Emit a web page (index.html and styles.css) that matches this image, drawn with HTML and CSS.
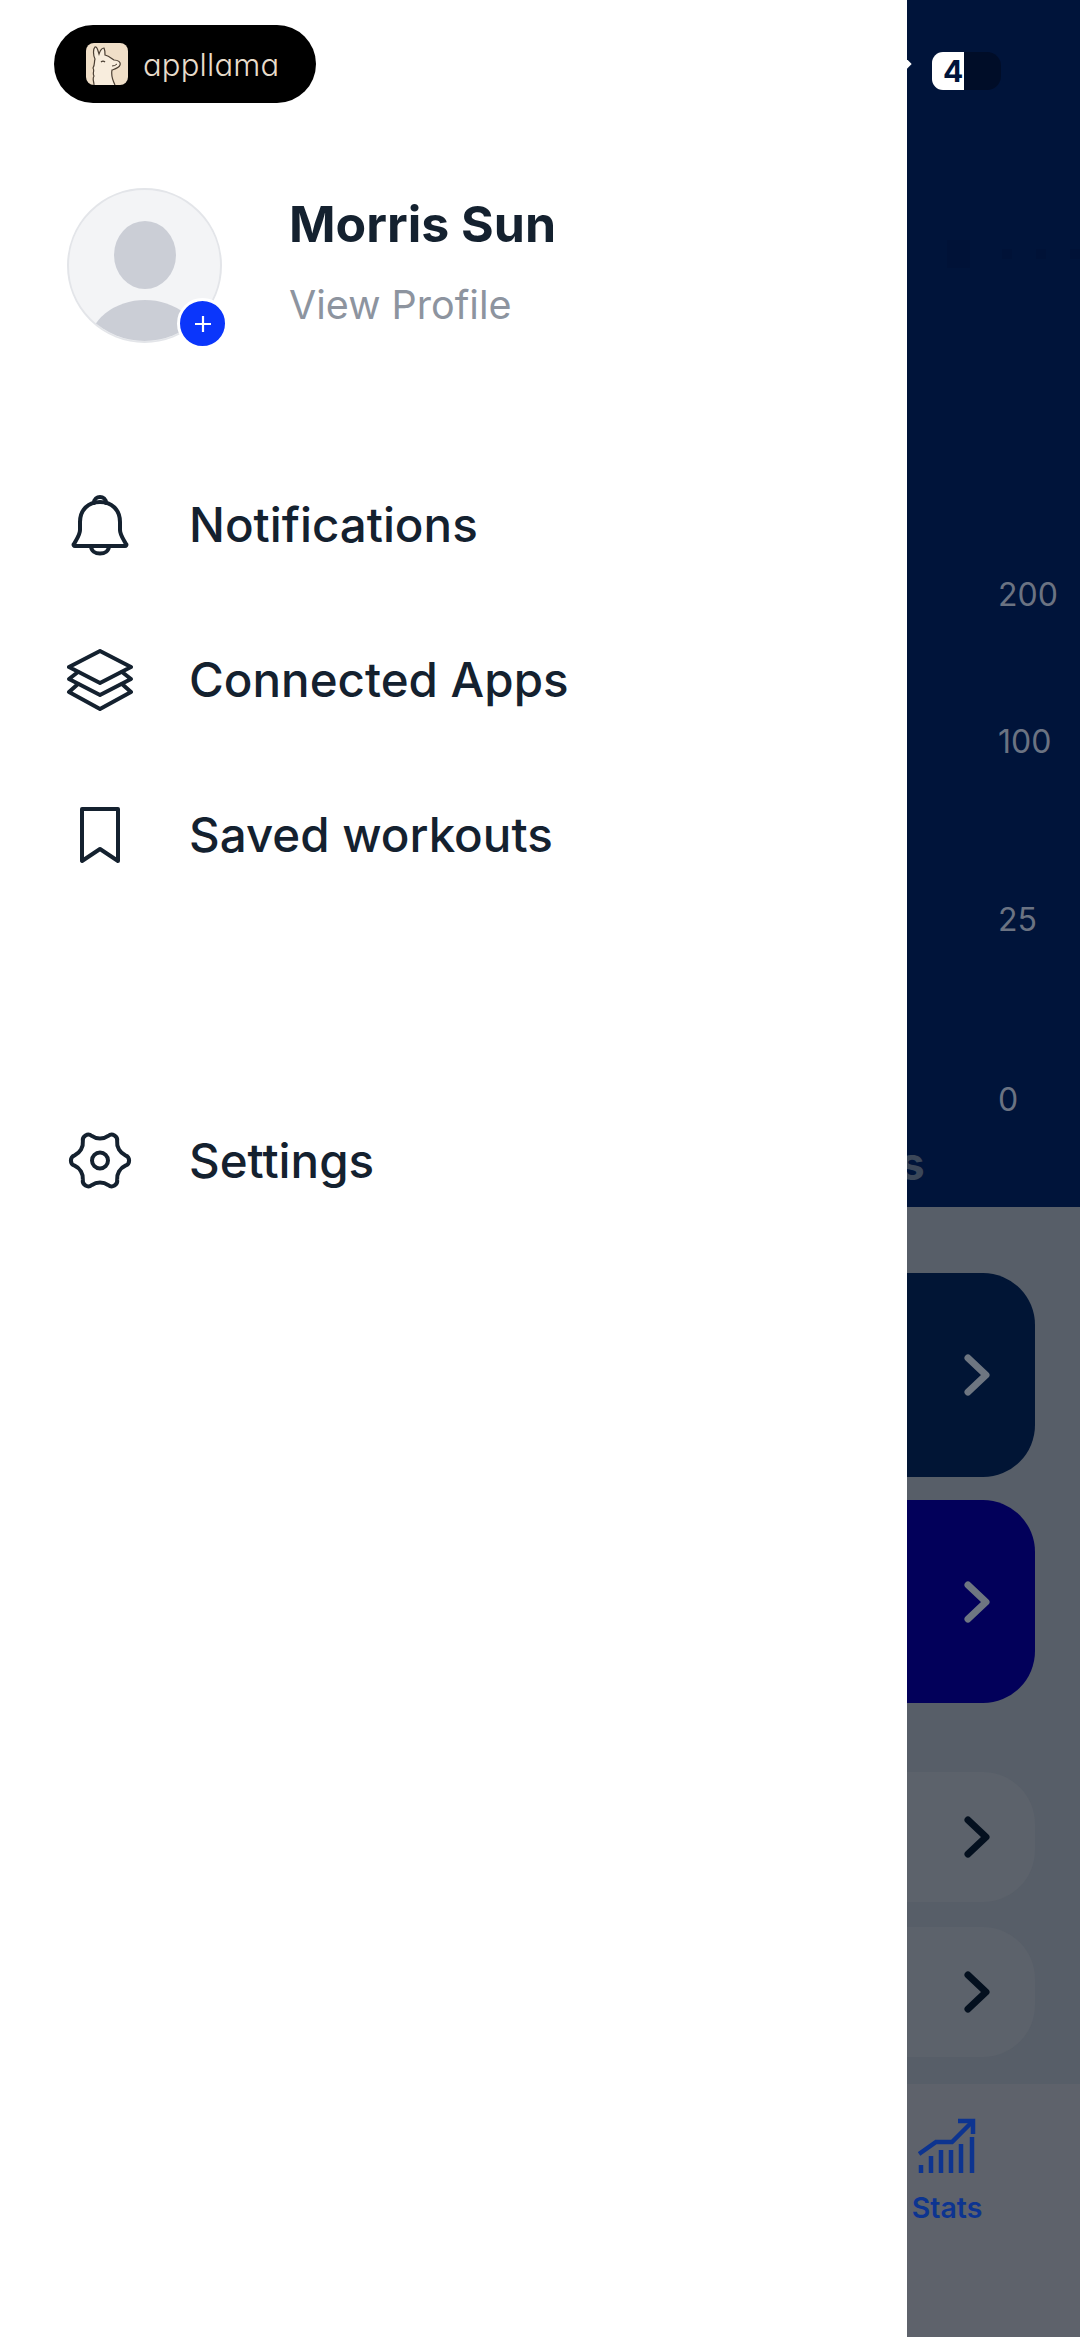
FILE: index.html
```html
<!DOCTYPE html>
<html>
<head>
    <title>Appllama</title>
    <meta name="viewport" content="width=device-width, initial-scale=1.0">
    <link rel="stylesheet" href="styles.css">
</head>
<body>
    <div id="app">
        <div id="drawer">
            <div class="brand">
                <svg class="brand-logo" viewBox="0 0 42 42">
                    <rect width="42" height="42" rx="8" fill="#f0dfc8"/>
                    <path d="M8 42C8 38 6 36 8 33C6 30 9 28 7 25C9 22 8 19 9 16C7 12 7 6 9 4C11 3 12 8 13 11C14 8 15 5 18 5C19 7 19 10 19 12C23 13 25 15 28 17C32 17 35 19 34 22C33 25 29 26 26 27C25 32 27 38 29 42" fill="#f8eddd" stroke="#4b3f33" stroke-width="1.2"/>
                    <path d="M15 19Q17 17 19 19" fill="none" stroke="#4b3f33" stroke-width="1.2"/>
                    <path d="M26 23Q29 23 31 21" fill="none" stroke="#4b3f33" stroke-width="1"/>
                </svg>
                <span class="brand-name">appllama</span>
            </div>

            <div class="profile">
                <div class="avatar">
                    <div class="avatar-clip">
                        <div class="avatar-head"></div>
                        <div class="avatar-body"></div>
                    </div>
                    <div class="avatar-add">
                        <svg viewBox="0 0 20 20" width="20" height="20"><path d="M10 2V18M2 10H18" stroke="#fff" stroke-width="2.2" fill="none"/></svg>
                    </div>
                </div>
                <div class="profile-text">
                    <div class="profile-name">Morris Sun</div>
                    <div class="profile-link">View Profile</div>
                </div>
            </div>

            <div class="menu">
                <div class="menu-item">
                    <div class="menu-icon">
                        <svg viewBox="0 0 60 62" width="60" height="62">
                            <path d="M30 8C18 8 10 16 10 28V36C10 41 6 46 4 50C3 51 4 52 5 52H55C56 52 57 51 56 50C54 46 50 41 50 36V28C50 16 42 8 30 8Z"/>
                            <path d="M24 9C24 1 36 1 36 9"/>
                            <path d="M21 52C21 62 39 62 39 52"/>
                        </svg>
                    </div>
                    <span>Notifications</span>
                </div>
                <div class="menu-item">
                    <div class="menu-icon">
                        <svg viewBox="0 0 68 62" width="68" height="62">
                            <path d="M34 2L65 18L34 34L3 18Z"/>
                            <path d="M12 23L3 30L34 46L65 30L56 23"/>
                            <path d="M12 35L3 43L34 60L65 43L56 35"/>
                        </svg>
                    </div>
                    <span>Connected Apps</span>
                </div>
                <div class="menu-item">
                    <div class="menu-icon">
                        <svg viewBox="0 0 42 58" width="42" height="58">
                            <path d="M3 3H39V55L21 43L3 55Z"/>
                        </svg>
                    </div>
                    <span>Saved workouts</span>
                </div>
                <div class="menu-item menu-settings">
                    <div class="menu-icon">
                        <svg viewBox="-2 -2 64 61" width="64" height="61">
                            <path d="M21.8 3.95A14 14 0 0 0 38.2 3.95A5.5 5.5 0 0 1 47.15 9.1A14 14 0 0 0 55.4 23.3A5.5 5.5 0 0 1 55.4 33.7A14 14 0 0 0 47.15 47.9A5.5 5.5 0 0 1 38.2 53.05A14 14 0 0 0 21.8 53.05A5.5 5.5 0 0 1 12.85 47.9A14 14 0 0 0 4.6 33.7A5.5 5.5 0 0 1 4.6 23.3A14 14 0 0 0 12.85 9.1A5.5 5.5 0 0 1 21.8 3.95Z"/>
                            <circle cx="30" cy="28.5" r="8"/>
                        </svg>
                    </div>
                    <span>Settings</span>
                </div>
            </div>
        </div>

        <div id="backdrop">
            <div class="panel">
                <div class="status">
                    <div class="status-dot"></div>
                    <div class="battery">
                        <div class="battery-on">4</div>
                        <div class="battery-off"></div>
                    </div>
                </div>
                <div class="faint-icons">
                    <div class="faint-square"></div>
                    <div class="faint-dot"></div>
                    <div class="faint-dot"></div>
                    <div class="faint-dot"></div>
                </div>
                <div class="axis">
                    <div class="axis-label">200</div>
                    <div class="axis-label gap-small">100</div>
                    <div class="axis-label gap-big">25</div>
                    <div class="axis-label gap-last">0</div>
                </div>
                <div class="cut-word">s</div>
            </div>

            <div class="cards">
                <div class="card card-navy">
                    <svg class="chevron dim" viewBox="0 0 26 42"><path d="M4 4L22 21L4 38"/></svg>
                </div>
                <div class="card card-indigo">
                    <svg class="chevron dim" viewBox="0 0 26 42"><path d="M4 4L22 21L4 38"/></svg>
                </div>
                <div class="card card-plain">
                    <svg class="chevron" viewBox="0 0 26 42"><path d="M4 4L22 21L4 38"/></svg>
                </div>
                <div class="card card-plain">
                    <svg class="chevron" viewBox="0 0 26 42"><path d="M4 4L22 21L4 38"/></svg>
                </div>
            </div>

            <div class="tabbar">
                <div class="tab">
                    <svg viewBox="0 0 58 56" width="58" height="56">
                        <path d="M3 55V47M13 55V38M23 55V32M33 55V32M43 55V26M54 55V19"/>
                        <path d="M1 36L18 24H34L54 4"/>
                        <path d="M40 3H55V16"/>
                    </svg>
                    <span>Stats</span>
                </div>
            </div>
        </div>
    </div>
</body>
</html>
```

FILE: styles.css
```css
* {
    box-sizing: border-box;
}

body {
    margin: 0;
    background: #5d6169;
    font-family: Inter, "Liberation Sans", sans-serif;
    overflow: hidden;
}

#app {
    display: flex;
    width: 1080px;
    height: 2337px;
    overflow: hidden;
}

#drawer {
    width: 907px;
    flex-shrink: 0;
    padding: 25px 0 0 54px;
    background: #fff;
    color: #14212f;
}

.brand {
    display: flex;
    align-items: center;
    gap: 15px;
    width: 262px;
    height: 78px;
    padding-left: 32px;
    background: #000;
    border-radius: 39px;
}

.brand-logo {
    width: 42px;
    height: 42px;
}

.brand-name {
    font-size: 31px;
    font-weight: 300;
    font-feature-settings: "cv11";
    color: #e8dccb;
    letter-spacing: 0.2px;
}

.profile {
    display: flex;
    align-items: center;
    gap: 67px;
    margin: 85px 0 0 13px;
}

.avatar {
    position: relative;
    width: 155px;
    height: 155px;
}

.avatar-clip {
    position: relative;
    width: 100%;
    height: 100%;
    border: 2px solid #e3e5e9;
    border-radius: 50%;
    background: #f3f4f6;
    overflow: hidden;
}

.avatar-head {
    width: 62px;
    height: 68px;
    margin: 31px auto 0;
    border-radius: 50%;
    background: #cbced6;
}

.avatar-body {
    width: 112px;
    height: 90px;
    margin: 11px auto 0;
    border-radius: 50%;
    background: #cbced6;
}

.avatar-add {
    position: absolute;
    top: 110px;
    left: 110px;
    display: flex;
    align-items: center;
    justify-content: center;
    width: 51px;
    height: 51px;
    background: #0b36fb;
    border: 3px solid #fff;
    border-radius: 50%;
}

.profile-text {
    margin-bottom: 10px;
}

.profile-name {
    font-size: 50px;
    font-weight: 700;
    line-height: 60px;
}

.profile-link {
    margin-top: 28px;
    font-size: 39.5px;
    line-height: 46px;
    color: #8d949f;
}

.menu {
    margin: 104px 0 0 0;
}

.menu-item {
    display: flex;
    align-items: center;
    height: 155px;
    font-size: 47.5px;
    font-weight: 500;
}

.menu-settings {
    margin-top: 171px;
}

.menu-icon {
    display: flex;
    justify-content: center;
    width: 92px;
    margin: 0 43px 0 0;
}

.menu-icon svg {
    fill: none;
    stroke: #14212f;
    stroke-width: 4;
    stroke-linejoin: round;
    stroke-linecap: round;
}

#backdrop {
    display: flex;
    flex-direction: column;
    flex: 1;
    min-width: 0;
    background: #575e68;
}

.panel {
    height: 1207px;
    background: #00143a;
    overflow: hidden;
}

.status {
    display: flex;
    align-items: center;
    height: 38px;
    margin-top: 52px;
}

.status-dot {
    width: 8px;
    height: 8px;
    margin: 0 0 14px -5px;
    background: #fff;
    transform: rotate(45deg);
}

.battery {
    display: flex;
    margin-left: 22px;
}

.battery-on {
    width: 32px;
    height: 38px;
    padding-left: 11px;
    font-size: 30px;
    font-weight: 700;
    line-height: 38px;
    color: #00143a;
    background: #fff;
    border-radius: 11px 0 0 11px;
    overflow: hidden;
}

.battery-off {
    width: 37px;
    height: 38px;
    background: #000d28;
    border-radius: 0 14px 14px 0;
}

.faint-icons {
    display: flex;
    align-items: center;
    gap: 24px;
    margin: 150px 0 0 40px;
}

.faint-square {
    width: 28px;
    height: 28px;
    margin-right: 8px;
    background: #001237;
}

.faint-dot {
    width: 12px;
    height: 10px;
    background: #001237;
}

.axis {
    margin: 311px 0 0 91px;
    font-size: 32px;
    color: #6b7382;
}

.axis-label {
    height: 32px;
    line-height: 32px;
}

.gap-small {
    margin-top: 115px;
}

.gap-big {
    margin-top: 146px;
}

.gap-last {
    margin-top: 148px;
}

.cut-word {
    margin: 22px 0 0 -8px;
    font-size: 46px;
    font-weight: 700;
    line-height: 50px;
    color: #3b4759;
}

.cards {
    display: flex;
    flex-direction: column;
    padding-top: 66px;
}

.card {
    display: flex;
    align-items: center;
    justify-content: flex-end;
    width: 128px;
    padding-right: 45px;
    border-radius: 0 52px 52px 0;
}

.card-navy {
    height: 204px;
    background: #011535;
}

.card-indigo {
    height: 203px;
    margin-top: 23px;
    background: #02005a;
}

.card-plain {
    height: 130px;
    margin-top: 25px;
    background: #5c626b;
}

.card-plain:nth-child(3) {
    margin-top: 69px;
}

.chevron {
    width: 26px;
    height: 42px;
    fill: none;
    stroke: #04101f;
    stroke-width: 7;
    stroke-linecap: round;
    stroke-linejoin: round;
}

.chevron.dim {
    stroke: #6e7681;
}

.tabbar {
    flex: 1;
    margin-top: 27px;
    padding-top: 34px;
    background: #5e626b;
}

.tab {
    display: flex;
    flex-direction: column;
    align-items: center;
    width: 76px;
    margin-left: 2px;
    font-size: 28.5px;
    font-weight: 600;
    color: #0d3490;
}

.tab svg {
    fill: none;
    stroke: #0d3490;
    stroke-width: 4.5;
}

.tab span {
    margin-top: 18px;
    line-height: 32px;
}
```
